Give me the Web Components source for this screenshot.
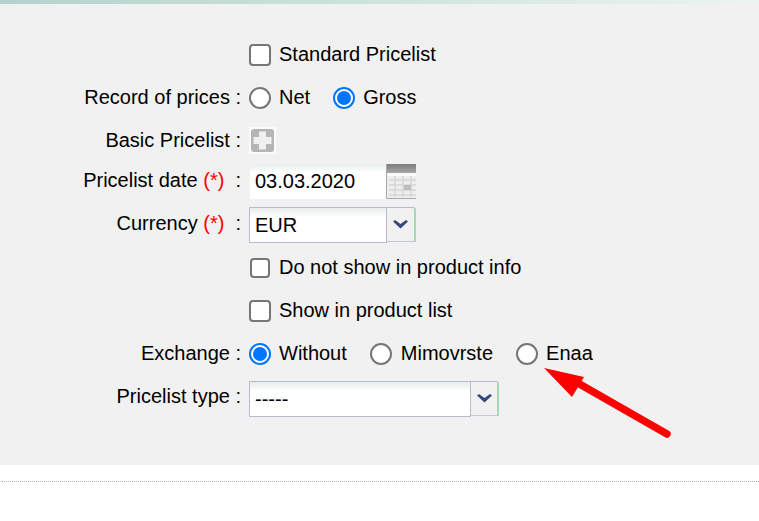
<!DOCTYPE html>
<html lang="en">
<head>
<meta charset="UTF-8">
<title>Pricelist</title>
<style>
html, body { margin: 0; padding: 0; background: #fff; overflow: hidden; }
body { font-family: "Liberation Sans", Arial, sans-serif; font-size: 20px; color: #000; }
</style>
</head>
<body>
<price-form>
    <form-row><check-box>Standard Pricelist</check-box></form-row>
    <form-row label="Record of prices :">
        <radio-box>Net</radio-box>
        <radio-box checked>Gross</radio-box>
    </form-row>
    <form-row label="Basic Pricelist :"><add-icon></add-icon></form-row>
    <form-row label="Pricelist date" required style="margin-top:-2px"><date-field value="03.03.2020"></date-field></form-row>
    <form-row label="Currency" required><select-field value="EUR" width="167" btn="29"></select-field></form-row>
    <form-row><check-box small>Do not show in product info</check-box></form-row>
    <form-row><check-box>Show in product list</check-box></form-row>
    <form-row label="Exchange :">
        <radio-box checked>Without</radio-box>
        <radio-box style="--gap:9px">Mimovrste</radio-box>
        <radio-box>Enaa</radio-box>
    </form-row>
    <form-row label="Pricelist type :" style="margin-top:2px;--label-raise:4px"><select-field value="-----" width="250" btn="28"></select-field></form-row>
    <red-arrow slot="over"></red-arrow>
</price-form>
<script>
class PriceForm extends HTMLElement {
    constructor() {
        super();
        this.attachShadow({mode: 'open'}).innerHTML = `
        <style>
            :host { display: block; position: relative; height: 521px; }
            .bar { height: 4px; background: linear-gradient(90deg, #b1d3cb, #ecf4f1); }
            .panel { background: #f1f1f1; height: 461px; padding-top: 29px; box-sizing: border-box; display: flex; flex-direction: column; }
            .line { margin: 16px 0 0 1px; border-top: 1px dotted #b4b4b4; }
        </style>
        <div class="bar"></div>
        <div class="panel"><slot></slot></div>
        <div class="line"></div>
        <slot name="over"></slot>`;
    }
}
class FormRow extends HTMLElement {
    constructor() {
        super();
        this.attachShadow({mode: 'open'}).innerHTML = `
        <style>
            :host { display: grid; grid-template-columns: 241px 1fr; column-gap: 8px; height: 43px; align-items: center; flex: none; }
            :host([required]) { --label-raise: 2px; }
            .label { text-align: right; white-space: pre; margin-bottom: var(--label-raise, 0); }
            .req { color: #f00; }
            .controls { display: flex; align-items: center; gap: 23px; }
        </style>
        <div class="label"></div>
        <div class="controls"><slot></slot></div>`;
        const label = this.shadowRoot.querySelector('.label');
        const text = this.getAttribute('label') || '';
        if (this.hasAttribute('required')) {
            label.innerHTML = text + ' <span class="req">(*)</span>&nbsp; :';
        } else {
            label.textContent = text;
        }
    }
}
class CheckBox extends HTMLElement {
    constructor() {
        super();
        this.attachShadow({mode: 'open'}).innerHTML = `
        <style>
            :host { display: inline-flex; align-items: center; gap: 8px; }
            .box { width: 22px; height: 22px; box-sizing: border-box; background: #fff; border: 2px solid #767676; border-radius: 4px; }
            :host([small]) { gap: 9px; }
            :host([small]) .box { width: 20px; height: 20px; margin-left: 1px; }
        </style>
        <span class="box"></span><slot></slot>`;
    }
}
class RadioBox extends HTMLElement {
    constructor() {
        super();
        this.attachShadow({mode: 'open'}).innerHTML = `
        <style>
            :host { display: inline-flex; align-items: center; gap: var(--gap, 8px); }
            .dot { width: 22px; height: 22px; box-sizing: border-box; background: #fff; border: 2px solid #767676; border-radius: 50%; position: relative; }
            :host([checked]) .dot { border-color: #0075ff; }
            :host([checked]) .dot::after { content: ""; position: absolute; inset: 2px; border-radius: 50%; background: #0075ff; }
        </style>
        <span class="dot"></span><slot></slot>`;
    }
}
class AddIcon extends HTMLElement {
    constructor() {
        super();
        this.attachShadow({mode: 'open'}).innerHTML = `
        <style>:host { display: block; width: 27px; height: 27px; } svg { display: block; }</style>
        <svg width="27" height="27" viewBox="0 0 27 27">
            <rect width="27" height="27" fill="#fbfbfb"/>
            <rect x="2" y="2" width="23" height="23" rx="3" fill="#b5b5b5"/>
            <path d="M10 4.500h7v5.500h5.500v7h-5.500v5.500h-7v-5.500h-5.500v-7h5.500z" fill="#f0f0f0"/>
        </svg>`;
    }
}
class DateField extends HTMLElement {
    constructor() {
        super();
        this.attachShadow({mode: 'open'}).innerHTML = `
        <style>
            :host { display: flex; width: 167px; height: 36px; }
            .input { width: 137px; height: 34px; margin: 1px 0 0 1px; padding-left: 5px; box-sizing: border-box; line-height: 32px;
                background: linear-gradient(#ebefef, #fff 7px); }
            svg { display: block; margin-left: -1px; }
        </style>
        <div class="input"></div>
        <svg width="30" height="36" viewBox="0 0 30 36">
            <defs><linearGradient id="top" x1="0" y1="0" x2="0" y2="1"><stop offset="0" stop-color="#7c7c7c"/><stop offset="1" stop-color="#a8a8a8"/></linearGradient></defs>
            <rect width="30" height="35" fill="#eeeeee"/>
            <rect width="30" height="9" fill="url(#top)"/>
            <rect y="9" width="30" height="3" fill="#fafafa"/>
            <path d="M3 16h27M3 21h27M3 26h27M3 31h27M9 12v21M17 12v21M25 12v21" stroke="#d6d6d6" stroke-width="1.500" fill="none"/>
            <rect x="18" y="21" width="7" height="5" fill="#bdbdbd"/>
            <path d="M.5 0v34.500H30" stroke="#a8a8a8" fill="none"/>
        </svg>`;
        this.shadowRoot.querySelector('.input').textContent = this.getAttribute('value');
    }
}
class SelectField extends HTMLElement {
    constructor() {
        super();
        this.attachShadow({mode: 'open'}).innerHTML = `
        <style>
            :host { display: flex; height: 36px; box-sizing: border-box; }
            .input { flex: 1; box-sizing: border-box; height: 36px; padding-left: 5px; line-height: 34px; border: 1px solid #b6bbd1;
                background: linear-gradient(#e8ecec, #fff 9px); }
            .btn { height: 35px; box-sizing: border-box; background: #f1f1f1; border-top: 1px solid #b6bbd1; border-bottom: 1px solid #c4c8d4; border-right: 2px solid #a5dbb4; border-radius: 0 3px 0 0; display: flex; align-items: center; justify-content: center; }
            svg { display: block; }
        </style>
        <div class="input"></div>
        <div class="btn">
            <svg width="15" height="9" viewBox="0 0 15 9"><path d="M0 1.500l2-1.500 5.500 4 5.500-4 2 1.500-7.500 7z" fill="#34497c"/></svg>
        </div>`;
        this.style.width = this.getAttribute('width') + 'px';
        this.shadowRoot.querySelector('.btn').style.width = this.getAttribute('btn') + 'px';
        this.shadowRoot.querySelector('.input').textContent = this.getAttribute('value');
    }
}
class RedArrow extends HTMLElement {
    constructor() {
        super();
        this.attachShadow({mode: 'open'}).innerHTML = `
        <style>:host { position: absolute; left: 540px; top: 365px; width: 135px; height: 80px; } svg { display: block; }</style>
        <svg width="135" height="80" viewBox="0 0 135 80">
            <path d="M127 69L36 17" stroke="#fe0000" stroke-width="7.500" stroke-linecap="round" fill="none"/>
            <path d="M4 3L44 12 32 32z" fill="#fe0000"/>
        </svg>`;
    }
}
customElements.define('price-form', PriceForm);
customElements.define('form-row', FormRow);
customElements.define('check-box', CheckBox);
customElements.define('radio-box', RadioBox);
customElements.define('add-icon', AddIcon);
customElements.define('date-field', DateField);
customElements.define('select-field', SelectField);
customElements.define('red-arrow', RedArrow);
</script>
</body>
</html>
